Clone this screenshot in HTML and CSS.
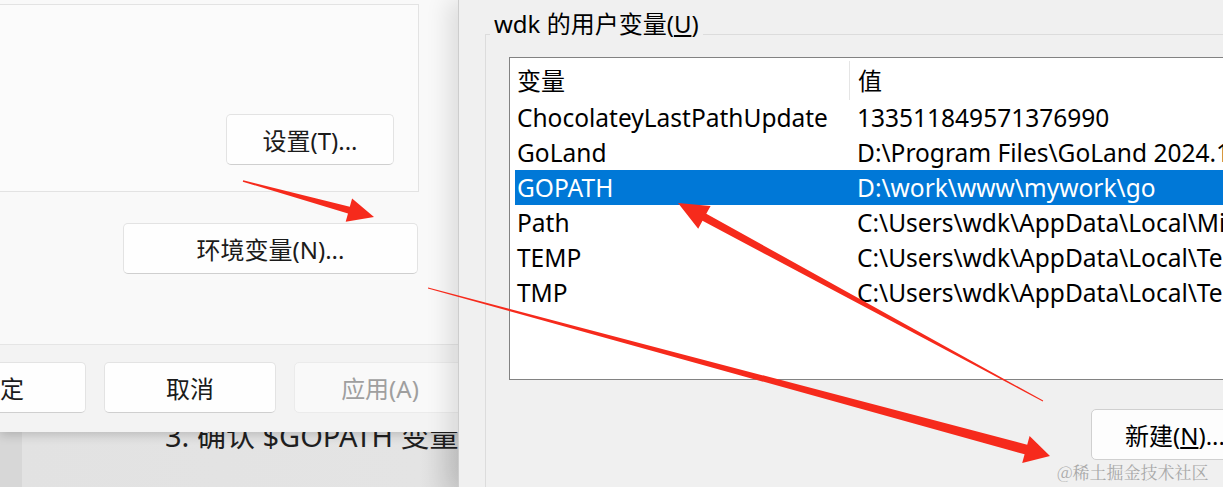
FILE: index.html
```html
<!DOCTYPE html>
<html lang="zh">
<head>
    <meta charset="UTF-8">
    <title>环境变量</title>
    <link rel="stylesheet" href="styles.css">
</head>
<body>

    <div class="left">
        <div class="sysdialog">
            <div class="panel">
                <button class="btn">设置(T)...</button>
            </div>
            <button class="btn env">环境变量(N)...</button>
            <div class="footer">
                <button class="btn">确定</button>
                <button class="btn">取消</button>
                <button class="btn off">应用(A)</button>
            </div>
        </div>
        <div class="backdrop">
            <div class="doc">3. 确认 $GOPATH 变量</div>
        </div>
    </div>

    <div class="envwin">
        <fieldset class="group">
            <legend>wdk 的用户变量(<u>U</u>)</legend>
            <div class="listbox">
                <div class="head">
                    <span class="name">变量</span>
                    <span class="value">值</span>
                </div>
                <div class="row"><span class="name">ChocolateyLastPathUpdate</span><span class="value">133511849571376990</span></div>
                <div class="row"><span class="name">GoLand</span><span class="value">D:\Program Files\GoLand 2024.1\bin;</span></div>
                <div class="row sel"><span class="name">GOPATH</span><span class="value">D:\work\www\mywork\go</span></div>
                <div class="row"><span class="name">Path</span><span class="value">C:\Users\wdk\AppData\Local\Microsoft\WindowsApps;</span></div>
                <div class="row"><span class="name">TEMP</span><span class="value">C:\Users\wdk\AppData\Local\Temp</span></div>
                <div class="row"><span class="name">TMP</span><span class="value">C:\Users\wdk\AppData\Local\Temp</span></div>
            </div>
            <div class="actions">
                <button class="wbtn">新建(<u>N</u>)...</button>
            </div>
        </fieldset>
    </div>

    <!-- 标注箭头 -->
    <svg class="arrows" width="1223" height="487" viewBox="0 0 1223 487">
        <polygon points="243.2,180.3 349.8,206.7 352.1,198.5 374,217 345.7,221.7 348,213.5 242.8,181.7" />
        <polygon points="1043.2,400.6 706.3,213.8 710.6,205.9 678,203 698.2,228.7 702.5,220.8 1042.8,401.4" />
        <polygon points="428.1,287.5 1027.2,444.7 1029.6,436 1050,456 1022.2,463 1024.6,454.3 427.9,288.5" />
    </svg>

    <div class="watermark">@稀土掘金技术社区</div>

</body>
</html>
```

FILE: styles.css
```css
body {
    margin: 0;
    width: 1223px;
    height: 487px;
    overflow: hidden;
    display: flex;
    position: relative;
    font-family: "Noto Sans", "Noto Sans CJK SC", sans-serif;
    background-color: #e4e4e4;
}
button {
    font-family: inherit;
    cursor: pointer;
}

/* 左侧系统属性对话框 */
.left {
    width: 458px;
    flex-shrink: 0;
    display: flex;
    flex-direction: column;
    overflow: hidden;
}
.sysdialog {
    height: 432px;
    flex-shrink: 0;
    background-color: #f9f9f9;
    padding-top: 4px;
    box-sizing: border-box;
    display: flex;
    flex-direction: column;
    position: relative;
    z-index: 1;
    box-shadow: 0 3px 10px rgba(0, 0, 0, 0.18);
}
.panel {
    height: 188px;
    margin: 0 39px 0 -20px;
    background-color: #fbfbfb;
    border: 1px solid #e3e3e3;
    box-sizing: border-box;
    display: flex;
    justify-content: flex-end;
    align-items: flex-end;
    padding: 0 24px 26px 0;
}
.btn {
    width: 168px;
    height: 51px;
    flex-shrink: 0;
    background-color: #fefefe;
    border: 1px solid #e3e3e3;
    border-bottom-color: #cfcfcf;
    border-radius: 5px;
    font-size: 24px;
    color: #1b1b1b;
    padding: 0;
}
.env {
    width: 295px;
    margin: 31px 40px 0 auto;
}
.footer {
    margin-top: 70px;
    flex: 1;
    background-color: #f3f3f3;
    border-top: 1px solid #e5e5e5;
    display: flex;
    gap: 18px;
    padding-top: 17px;
    margin-left: -86px;
}
.footer .btn {
    width: 172px;
}
.btn.off {
    background-color: #f9f9f9;
    border-color: #ebebeb;
    color: #9f9f9f;
}
.backdrop {
    flex: 1;
    overflow: hidden;
    background: linear-gradient(90deg, #d7d7d7 0, #d7d7d7 22px, #e2e2e2 22px, #e4e4e4 420px, #d2d2d2 458px);
}
.doc {
    margin: -11px 0 0 165px;
    font-size: 29px;
    line-height: 29px;
    color: #1f1f1f;
    white-space: nowrap;
}

/* 右侧环境变量窗口 */
.envwin {
    flex: 1;
    background-color: #f0f0f0;
    border-left: 1px solid #cdcdcd;
    padding-top: 12px;
    position: relative;
    z-index: 2;
    box-shadow: -10px 0 22px rgba(0, 0, 0, 0.11);
    overflow: hidden;
}
.group {
    margin: 0 0 0 26px;
    padding: 0;
    border: none;
    border-top: 1px solid #dcdcdc;
    border-left: 1px solid #dcdcdc;
    height: 600px;
    width: 900px;
}
.group legend {
    margin-left: 4px;
    padding: 0 4px 21px 4px;
    font-size: 24px;
    line-height: 24px;
    color: #000;
}
.listbox {
    margin-left: 23px;
    width: 860px;
    height: 323px;
    box-sizing: border-box;
    background-color: #fff;
    border: 1px solid #828282;
    font-size: 24.5px;
    color: #000;
}
.head, .row {
    display: flex;
    white-space: nowrap;
    margin-left: 5px;
    padding-left: 2px;
}
.head {
    height: 42px;
    align-items: center;
}
.head .name {
    font-size: 24px;
    border-right: 1px solid #e5e5e5;
    height: 39px;
    line-height: 39px;
    margin-top: 3px;
    width: 332px;
    margin-right: 8px;
}
.head .value {
    font-size: 24px;
}
.row {
    height: 35px;
    line-height: 35px;
}
.name {
    width: 340px;
    flex-shrink: 0;
}
.row.sel {
    background-color: #0078d7;
    color: #fff;
}
.actions {
    margin: 29px 0 0 605px;
}
.wbtn {
    width: 172px;
    height: 51px;
    background-color: #fdfdfd;
    border: 1px solid #d0d0d0;
    border-radius: 5px;
    font-size: 24px;
    color: #000;
    text-align: left;
    padding: 0 0 0 33px;
    white-space: nowrap;
}

.arrows {
    position: absolute;
    left: 0;
    top: 0;
    pointer-events: none;
    z-index: 10;
    fill: #f62a1c;
}
.watermark {
    position: absolute;
    left: 1057px;
    top: 459px;
    font-size: 17px;
    color: #a9a9a9;
    z-index: 11;
    font-family: "Noto Serif CJK SC", "Noto Sans CJK SC", serif;
}
```
